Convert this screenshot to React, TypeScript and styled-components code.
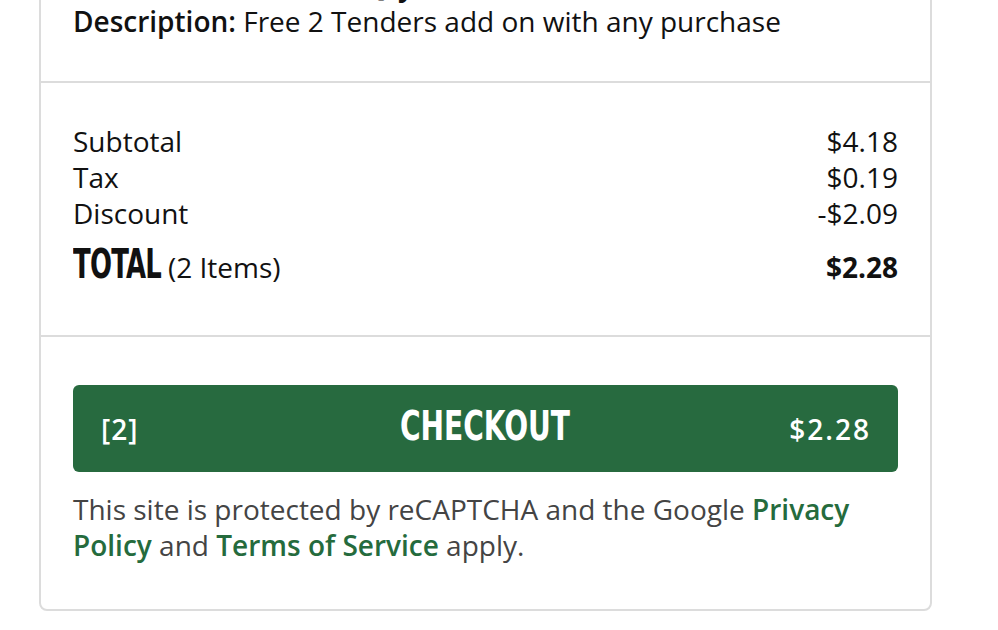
import styled, { createGlobalStyle } from "styled-components";

const GlobalStyle = createGlobalStyle`
  html, body {
    margin: 0;
    padding: 0;
    background: #ffffff;
    overflow: hidden;
  }
  body {
    font-family: "Open Sans", "Noto Sans", sans-serif;
    color: #111111;
  }
`;

const Page = styled.div`
  width: 998px;
  height: 630px;
  padding: 0 66px 0 39px;
  box-sizing: border-box;
  overflow: hidden;
`;

const Card = styled.div`
  margin-top: -35px;
  border: 2px solid #dcdcdc;
  border-radius: 8px;
  background: #fff;
`;

const Section = styled.div<{ $pad: string; $last?: boolean }>`
  padding: ${(p) => p.$pad};
  border-bottom: ${(p) => (p.$last ? "none" : "2px solid #dcdcdc")};
`;

const ItemTitle = styled.div`
  font-size: 28px;
  font-weight: 700;
  line-height: 36px;
`;

const Line = styled.div`
  font-size: 28px;
  line-height: 36px;

  b {
    font-weight: 600;
  }
`;

const Row = styled.div`
  display: flex;
  justify-content: space-between;
  align-items: baseline;
  font-size: 28px;
  line-height: 36px;
`;

const TotalRow = styled(Row)`
  margin-top: 15px;
`;

const TotalLabel = styled.span`
  font-family: "Liberation Sans Narrow", "DejaVu Sans Condensed", "Liberation Sans", sans-serif;
  font-weight: 700;
  font-size: 40px;
  line-height: 36px;
  letter-spacing: -1px;
  display: inline-block;
  transform: scaleX(0.72);
  transform-origin: left center;
  width: 85px;
  margin-right: 10px;
`;

const Strong = styled.span`
  font-weight: 700;
`;

const CheckoutButton = styled.button`
  width: 100%;
  height: 87px;
  border: none;
  border-radius: 6px;
  background: #276a3f;
  color: #fff;
  display: grid;
  grid-template-columns: 1fr auto 1fr;
  align-items: center;
  padding: 0 29px 0 28px;
  box-sizing: border-box;
  cursor: pointer;
  font-family: "Open Sans", sans-serif;
`;

const ButtonSide = styled.span<{ $align: "left" | "right" }>`
  text-align: ${(p) => p.$align};
  font-size: 28px;
  font-weight: 600;
  letter-spacing: ${(p) => (p.$align === "right" ? "2px" : "1px")};
  margin-right: ${(p) => (p.$align === "right" ? "-2px" : "0")};
`;

const ButtonLabel = styled.span`
  font-family: "Liberation Sans Narrow", "DejaVu Sans Condensed", "Liberation Sans", sans-serif;
  font-weight: 700;
  font-size: 40px;
  display: inline-block;
  margin-bottom: 6px;
  transform: scaleX(0.78);
`;

const Legal = styled.p`
  margin: 19px 0 0;
  font-size: 28px;
  line-height: 36px;
  color: #444;

  a {
    color: #256b3d;
    font-weight: 600;
    text-decoration: none;
  }
`;

export default function App() {
  return (
    <>
      <GlobalStyle />
      <Page>
        <Card>
          <Section $pad="0 32px 42px">
            <ItemTitle>Free 2 Tenders Deal (Qty 1)</ItemTitle>
            <Line>
              <b>Description:</b> Free 2 Tenders add on with any purchase
            </Line>
          </Section>
          <Section $pad="40px 32px 50px">
            <Row>
              <span>Subtotal</span>
              <span>$4.18</span>
            </Row>
            <Row>
              <span>Tax</span>
              <span>$0.19</span>
            </Row>
            <Row>
              <span>Discount</span>
              <span>-$2.09</span>
            </Row>
            <TotalRow>
              <span>
                <TotalLabel>TOTAL</TotalLabel>(2 Items)
              </span>
              <Strong>$2.28</Strong>
            </TotalRow>
          </Section>
          <Section $pad="48px 32px 46px" $last>
            <CheckoutButton>
              <ButtonSide $align="left">[2]</ButtonSide>
              <ButtonLabel>CHECKOUT</ButtonLabel>
              <ButtonSide $align="right">$2.28</ButtonSide>
            </CheckoutButton>
            <Legal>
              This site is protected by reCAPTCHA and the Google{" "}
              <a href="#">Privacy Policy</a> and <a href="#">Terms of Service</a> apply.
            </Legal>
          </Section>
        </Card>
      </Page>
    </>
  );
}
